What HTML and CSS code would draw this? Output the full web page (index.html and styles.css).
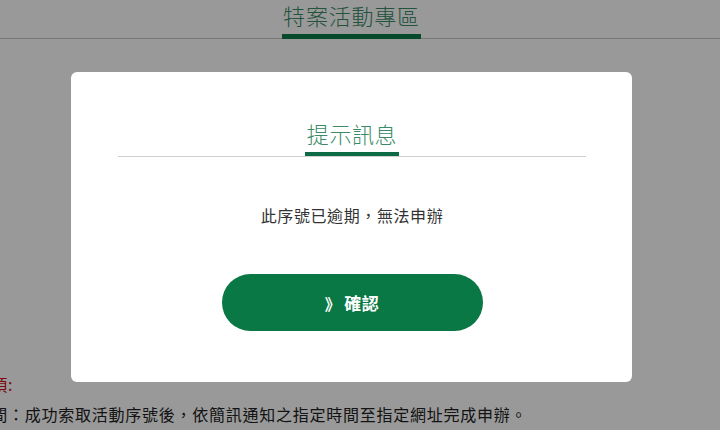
FILE: index.html
```html
<!DOCTYPE html>
<html lang="zh-Hant">
<head>
<meta charset="utf-8">
<title>特案活動專區</title>
<link rel="stylesheet" href="styles.css">
</head>
<body>
<div class="page">
  <header class="page-head">
    <h1 class="page-title">特案活動專區</h1>
  </header>
  <section class="notice">
    <p class="notice-label">注意事項:</p>
    <p class="notice-text">活動期間：成功索取活動序號後，依簡訊通知之指定時間至指定網址完成申辦。</p>
  </section>
</div>

<div class="overlay">
  <div class="modal" role="dialog" aria-labelledby="modal-title">
    <div class="modal-head">
      <h2 class="modal-title" id="modal-title">提示訊息</h2>
    </div>
    <p class="modal-msg">此序號已逾期，無法申辦</p>
    <button class="modal-btn" type="button"><span class="btn-arrow">》</span>確認</button>
  </div>
</div>
</body>
</html>
```
FILE: styles.css
```css
* { box-sizing: border-box; }

html, body {
  margin: 0;
  padding: 0;
  background: #fff;
  font-family: "Noto Sans CJK TC", "Noto Sans", sans-serif;
  overflow: hidden;
}

.page {
  width: 720px;
  height: 430px;
}

.page-head {
  padding-right: 17px;
  text-align: center;
  border-bottom: 1px solid #c8c8c8;
}

.page-title {
  display: inline-block;
  margin: 0;
  font-size: 22px;
  font-weight: 300;
  line-height: 30px;
  letter-spacing: 0.8px;
  color: #3a8a65;
  padding: 0 1px 4px;
  border-bottom: 5px solid #0b7a48;
  margin-bottom: -1px;
}

.notice {
  margin: 330px 0 0 -59px;
  font-size: 16px;
  letter-spacing: 0.75px;
  line-height: 30px;
  color: #222;
  white-space: nowrap;
}

.notice p { margin: 0; }

.notice-label { color: #d0101e; }

.overlay {
  position: fixed;
  inset: 0;
  background: rgba(0, 0, 0, 0.4);
  padding: 72px 0 0 71px;
}

.modal {
  width: 561px;
  background: #fff;
  border-radius: 6px;
  padding: 46px 46px 51px 47px;
  text-align: center;
}

.modal-head {
  border-bottom: 1px solid #cfcfcf;
}

.modal-title {
  display: inline-block;
  margin: 0;
  font-size: 22px;
  font-weight: 300;
  line-height: 30px;
  letter-spacing: 0.6px;
  color: #3a8a65;
  padding: 0 0 4px;
  border-bottom: 4px solid #0d6b45;
  width: 94px;
}

.modal-msg {
  margin: 46px 0 0;
  font-size: 16px;
  line-height: 24px;
  letter-spacing: 0.6px;
  color: #333;
}

.modal-btn {
  display: block;
  margin: 47px auto 0;
  width: 261px;
  height: 57px;
  border: 0;
  border-radius: 29px;
  background: #0a7845;
  color: #fff;
  font-family: "Noto Sans CJK TC", "Noto Sans", sans-serif;
  font-size: 17px;
  font-weight: 700;
  letter-spacing: 0.5px;
  cursor: pointer;
}

.btn-arrow {
  font-size: 16px;
  margin-right: 3px;
}
```
